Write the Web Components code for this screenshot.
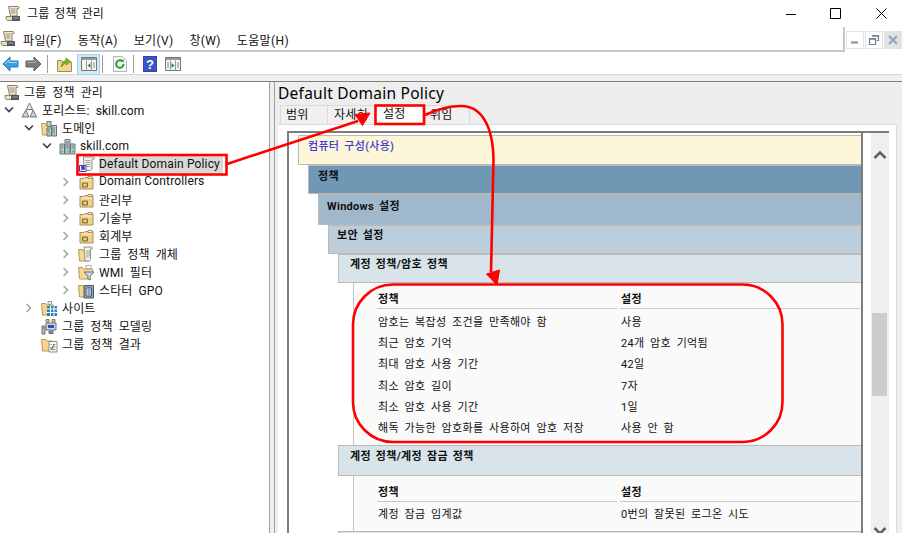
<!DOCTYPE html>
<html lang="ko"><head><meta charset="utf-8">
<style>
html,body{margin:0;padding:0;background:#fff;overflow:hidden}
body{width:902px;height:533px;font:12px Roboto,"Noto Sans CJK KR",sans-serif;color:#000}
</style></head><body>
<gpmc-window></gpmc-window>
<script>
const FONT='Roboto,"Noto Sans CJK KR",sans-serif';
const ICONS={
scroll:`<svg width="16" height="17" viewBox="0 0 16 17"><path d="M3.500 1.500h9.500c1 0 1.500 1 .8 2H12v7.500H5.500z" fill="#f3ead2" stroke="#8f8366"/><path d="M5.500 4h5M5.500 6h5M5.500 8h5" stroke="#8f8d84"/><path d="M1 11.500h9.500v4H2.500c-1 0-1.500-2-1.500-4z" fill="#e8dfc6" stroke="#8f8366"/><path d="M7 11h8v5H7z" fill="#4f5a5c"/><path d="M8.500 13h5" stroke="#a8b0b2"/></svg>`,
forest:`<svg width="17" height="16" viewBox="0 0 17 16"><path d="M8.500 1l3.200 6.500H5.300z" fill="#e9e9e9" stroke="#777"/><path d="M4.800 8L8 15H1z" fill="#cfcfcf" stroke="#777"/><path d="M12.200 8l3.300 7H9z" fill="#cfcfcf" stroke="#777"/></svg>`,
domains:`<svg width="17" height="17" viewBox="0 0 17 17"><path d="M.5 3.500h4l1 1.500h5.500v10H1.500z" fill="#f4d78c" stroke="#b9975a"/><path d="M6 1.500h4v5H6z" fill="#bcd0d6" stroke="#64787e"/><path d="M6 8h4.500v8H6zM11 5.500h4.500V16H11z" fill="#c6d2d5" stroke="#5f7076"/><path d="M7 10h2M7 12h2M12 8h2M12 10h2M12 12h2" stroke="#5f7076"/><path d="M8 14.500h1M13 14.500h1" stroke="#35c13a" stroke-width="2"/></svg>`,
domain:`<svg width="17" height="17" viewBox="0 0 17 17"><path d="M1 6h4.500v10H1zM6 1.500h5V16H6zM11.500 6H16v10h-4.500z" fill="#c6d2d5" stroke="#60757c"/><path d="M2 8h2.500M2 10h2.500M7 4h3M7 6h3M7 8h3M7 10h3M12.500 8H15M12.500 10H15" stroke="#60757c"/><path d="M2.500 13.500h1.500M8 13.500h1.500M13 13.500h1.500" stroke="#35c13a" stroke-width="2"/></svg>`,
gpo:`<svg width="16" height="16" viewBox="0 0 16 16"><path d="M4.500 1h10.300c.9 0 .9 1.800.2 2.200H13V12c0 1.500-1 2.500-2 2.500H5z" fill="#f7f4ea" stroke="#8d8d8d"/><path d="M6.500 4.500h5M6.500 6.500h5M6.500 8.500h5M7.500 10.500h4" stroke="#9b9b9b"/><path d="M.5 9.500h6.500v6H.5z" fill="#fff" stroke="#3d3d9e"/><path d="M2 11h3v3M4.800 11.200L2.200 14" fill="none" stroke="#2424b5" stroke-width="1.300"/></svg>`,
ou:`<svg width="15" height="15" viewBox="0 0 15 15"><path d="M1 3.500h4l1-1h8V14H1z" fill="#f0d28d" stroke="#a98f57"/><path d="M9 1.500h4v2H9z" fill="#fff" stroke="#a98f57"/><path d="M2 5h11" stroke="#fbefc8"/><path d="M3.500 8h5v4h-5z" fill="#c9a95b" stroke="#8a7037"/><path d="M5 10h2" stroke="#fff"/></svg>`,
gpofolder:`<svg width="17" height="17" viewBox="0 0 17 17"><path d="M.5 3.500h4l1 1.500h6v10h-10z" fill="#f4d78c" stroke="#b9975a"/><path d="M6 1h7.500c1 0 1 1.500.5 2h-1.500v9c0 2-1 3-2 3H7z" fill="#f7f4ea" stroke="#8d8d8d"/><path d="M8 5h4M8 7h4M8 9h4M8 11h3" stroke="#9b9b9b"/></svg>`,
wmi:`<svg width="17" height="17" viewBox="0 0 17 17"><path d="M.5 3.500h4l1 1.500h9v5h-3v5h-10z" fill="#f4d78c" stroke="#b9975a"/><path d="M8 1.500h5v3H8z" fill="#fff" stroke="#aaa"/><path d="M6 8h10l-3.800 4.200V16l-2.400-1.200v-2.600z" fill="#cdd5d9" stroke="#67757c"/></svg>`,
starter:`<svg width="17" height="17" viewBox="0 0 17 17"><path d="M.5 3.500h4l1 1.500h3v10h-7z" fill="#f4d78c" stroke="#b9975a"/><path d="M6 3.500h9.500V16H6z" fill="#8fa0b6" stroke="#4f5c70"/><path d="M8 6h5.500v8H8z" fill="#dfe7f2" stroke="#4f5c70"/><path d="M9.500 8h3M9.500 10h3M9.500 12h3" stroke="#395c99"/></svg>`,
sites:`<svg width="17" height="17" viewBox="0 0 17 17"><path d="M.5 3.500h4l1 1.500h7v10H1.500z" fill="#f4d78c" stroke="#b9975a"/><path d="M7 1.500h3.500v3H7z" fill="#e9f3f7" stroke="#7ea0b0"/><path d="M6 6h10v10H6z" fill="#2d7fbb"/><path d="M6 9h10M6 12.500h10M9.500 6v10M13 6v10" stroke="#fff"/></svg>`,
modeling:`<svg width="17" height="17" viewBox="0 0 17 17"><path d="M5 1.500h3v2.500H5zM11 1.500h3v2.500h-3z" fill="#e8c66e" stroke="#93784a"/><path d="M5 5h10v7H5z" fill="#cfd7e6" stroke="#5f6f8c"/><path d="M7 7h6v3H7z" fill="#2a54b0"/><path d="M8 13h4v2.500H8z" fill="#98a0a8" stroke="#5f6870"/><path d="M1 8h3v8H1z" fill="#b6bfb6" stroke="#687068"/><path d="M1.800 10h1.500" stroke="#38b838"/></svg>`,
results:`<svg width="17" height="17" viewBox="0 0 17 17"><path d="M.5 3.500h4l1 1.500h6v10h-10z" fill="#f4d78c" stroke="#b9975a"/><path d="M8 5.500h8V16H8z" fill="#fafafa" stroke="#8c8c8c"/><path d="M9.500 8.500h1.500M12.500 8.500h2M12.500 11h2M9.500 13.500h5" stroke="#8c8c8c"/><path d="M9.500 11.500l1.500 1 2-4" fill="none" stroke="#2a8d2e" stroke-width="1.100"/></svg>`
};
const svgT={
back:`<svg width="17" height="16" viewBox="0 0 17 16"><path d="M1 8l7-7v4h8v6H8v4z" fill="#36a0e0" stroke="#2a78b4"/><path d="M3 8l4-4v2.500h8" fill="none" stroke="#a8def8"/></svg>`,
fwd:`<svg width="17" height="16" viewBox="0 0 17 16"><path d="M16 8L9 1v4H1v6h8v4z" fill="#7b7b7b" stroke="#5f5f5f"/><path d="M2 6.500h8V4" fill="none" stroke="#b0b0b0"/></svg>`,
up:`<svg width="15" height="16" viewBox="0 0 15 16"><path d="M.5 4.500h4l1 1.500h9v9.500H.5z" fill="#f2d690" stroke="#a58a4d"/><path d="M4.500 11c0-4 2-6 4.500-6.500V2l4.500 3.500L9 9V6.800c-1.500.4-3 1.700-4.500 4.200z" fill="#7cbb22" stroke="#4d8a10" stroke-width=".7"/></svg>`,
tree:`<svg width="16" height="14" viewBox="0 0 16 14"><path d="M.5.500h15v13H.500z" fill="#f5f5f5" stroke="#777"/><path d="M1 1h14v2H1z" fill="#9a9a9a"/><path d="M5.500 3.500v10M10.500 3.500v10" stroke="#999"/><path d="M12 6h2M12 8h2M12 10h2" stroke="#888"/><path d="M9.500 6v5L6.500 8.500z" fill="#1e9a3e"/></svg>`,
refresh:`<svg width="14" height="16" viewBox="0 0 14 16"><path d="M.5.500h9l4 4v11H.500z" fill="#f6f6f6" stroke="#b5b5b5"/><path d="M10.500 8a3.700 3.700 0 1 1-1.300-2.800" fill="none" stroke="#2e9a3b" stroke-width="2"/><path d="M8 3.500l3 .4-.6 3z" fill="#2e9a3b"/></svg>`,
help:`<svg width="14" height="16" viewBox="0 0 14 16"><path d="M0 0h14v16H0z" fill="#2e49ab"/><path d="M1 1h12v14H1z" fill="#3957c2"/><text x="7" y="13" font-family="Liberation Sans" font-size="13" font-weight="bold" text-anchor="middle" fill="#fff">?</text></svg>`,
action:`<svg width="16" height="14" viewBox="0 0 16 14"><path d="M.5.500h15v13H.500z" fill="#f5f5f5" stroke="#777"/><path d="M1 1h14v2H1z" fill="#9a9a9a"/><path d="M5.500 3.500v10M10.500 3.500v10" stroke="#999"/><path d="M12 6h2M12 8h2M12 10h2M2 6h2M2 8h2M2 10h2" stroke="#888"/><path d="M6.500 6v5l3-2.500z" fill="#1e9a3e"/></svg>`
};

customElements.define('title-bar',class extends HTMLElement{constructor(){super();this.attachShadow({mode:'open'}).innerHTML=`<style>
:host{display:flex;align-items:center;height:27px;background:#fff;font-family:${FONT};font-size:12px}
.ic{margin-left:5px;width:16px;height:17px;display:flex}
.t{margin:-2px 0 0 6px;flex:1;word-spacing:2px;letter-spacing:.1px;color:#111}
.b{width:45px;height:27px;display:flex;align-items:center;justify-content:center}
</style><span class="ic">${ICONS.scroll}</span><span class="t"><slot></slot></span>
<span class="b"><svg width="10" height="10"><path d="M0 5.500h10" stroke="#000"/></svg></span>
<span class="b"><svg width="11" height="11"><path d="M.5.500h10v10H.500z" fill="none" stroke="#000"/></svg></span>
<span class="b" style="margin:0 -2px 0 1px"><svg width="11" height="11"><path d="M.5.500l10 10M10.500.500l-10 10" stroke="#000"/></svg></span>`}});

customElements.define('menu-bar',class extends HTMLElement{constructor(){super();this.attachShadow({mode:'open'}).innerHTML=`<style>
:host{display:flex;height:25px;background:#fff;font-family:${FONT};font-size:12px;color:#111}
.m{width:846px;height:23px;border-bottom:2px solid #c4c7cc;border-right:2px solid #c4c7cc;display:flex;align-items:center;gap:16px}
.ic{width:16px;height:17px;margin-right:-9px;display:flex}
::slotted(span){letter-spacing:.35px;padding-top:2px}
.ctl{display:flex;gap:1px;margin:4px 0 0 1px}
.c{width:16px;height:16px;border:1px solid #e4e4e4;display:flex;align-items:center;justify-content:center}
.c.x{background:#e3e3e3;border-color:#e3e3e3}
</style><div class="m"><span class="ic">${ICONS.scroll}</span><slot></slot></div>
<div class="ctl"><span class="c"><svg width="10" height="10"><path d="M1 7.500h7" stroke="#7d8ea3" stroke-width="2"/></svg></span>
<span class="c"><svg width="12" height="12"><path d="M4.500 1.500h6v5h-2M1.500 4.500h6v6h-6z" fill="none" stroke="#6e8096" stroke-width="1.200"/><path d="M4 2h6.500M1.500 5h6" stroke="#6e8096" stroke-width="1.500"/></svg></span>
<span class="c x"><svg width="10" height="10"><path d="M1 1l8 8M9 1L1 9" stroke="#95a6bb" stroke-width="2.300"/></svg></span></div>`}});

customElements.define('tool-bar',class extends HTMLElement{constructor(){super();this.attachShadow({mode:'open'}).innerHTML=`<style>
:host{display:flex;align-items:center;box-sizing:border-box;height:23px;background:#fff;padding:2px 0 0 2px;border-bottom:1px solid #d6d6d6}
span{display:flex}
.s{width:1px;height:18px;background:#9d9d9d}
.on{height:21px;width:23px;background:#d3e9fa;border:1px solid #a6d2f4;align-items:center;justify-content:center;box-sizing:border-box}
</style><span>${svgT.back}</span><span style="margin-left:6px">${svgT.fwd}</span><span class="s" style="margin-left:5px"></span>
<span style="margin-left:9px">${svgT.up}</span><span class="on" style="margin-left:5px">${svgT.tree}</span><span class="s" style="margin-left:2px"></span>
<span style="margin-left:10px">${svgT.refresh}</span><span class="s" style="margin-left:6px"></span>
<span style="margin-left:9px">${svgT.help}</span><span style="margin-left:8px">${svgT.action}</span>`}});

customElements.define('tree-row',class extends HTMLElement{constructor(){super();
const lv=+this.getAttribute('level'),st=this.getAttribute('state')||'',ic=this.getAttribute('icon'),sel=this.hasAttribute('selected');
const pad=[3,21,41,59,78][lv+1];
const latin=/^[\x00-\x7f]+$/.test(this.textContent);
const ch=st==='open'?`<svg width="10" height="8"><path d="M1 1.500l4 4 4-4" fill="none" stroke="#404040" stroke-width="1.600"/></svg>`:st==='closed'?`<svg width="8" height="10"><path d="M1.500 1l4 4-4 4" fill="none" stroke="#a6a6a6" stroke-width="1.600"/></svg>`:'';
this.attachShadow({mode:'open'}).innerHTML=`<style>
:host{display:block;height:18px;font-family:${FONT};font-size:12px;color:#111}
.r{height:18px;display:flex;align-items:center;padding-left:${pad}px;position:relative}
.a{position:absolute;left:${pad-18}px;top:0;height:18px;width:12px;display:flex;align-items:center;justify-content:center}
.i{width:17px;height:17px;display:flex;align-items:center;justify-content:center;flex:none}
.t{margin:${latin&&this.textContent!=='Domain Controllers'?0:-2}px 0 0 4px;padding-right:3px;word-spacing:${latin?0:3}px;letter-spacing:${latin?.15:.1}px;white-space:nowrap;${sel?'background:#d9d9d9;height:18px;line-height:18px;':''}}
</style><div class="r">${ch?`<span class="a">${ch}</span>`:''}<span class="i">${ICONS[ic]}</span><span class="t"><slot></slot></span></div>`}});

customElements.define('tree-pane',class extends HTMLElement{constructor(){super();this.attachShadow({mode:'open'}).innerHTML=`<style>
:host{display:block;width:269px;background:#fff;border-right:1px solid #a0a0a0;padding-top:1px}
</style><slot></slot>`}});

customElements.define('tab-strip',class extends HTMLElement{constructor(){super();this.attachShadow({mode:'open'}).innerHTML=`<style>
:host{display:flex;height:19px;padding-left:3px;align-items:stretch}
</style><slot></slot>`}});
customElements.define('tab-item',class extends HTMLElement{constructor(){super();const on=this.hasAttribute('active');this.attachShadow({mode:'open'}).innerHTML=`<style>
:host{display:block;box-sizing:border-box;width:${this.getAttribute('w')}px;height:${on?20:19}px;background:${on?'#fff':'#f0f0f0'};border:1px solid #dadada;border-bottom:none;margin-left:-1px;font-family:${FONT};font-size:12px;letter-spacing:.3px;color:#111;padding:${on?0:1}px 0 0 ${this.getAttribute('pad')}px;line-height:16px;position:relative}
</style><slot></slot>`}});

customElements.define('report-band',class extends HTMLElement{constructor(){super();const ind=this.getAttribute('indent')||0,bg=this.getAttribute('bg'),h=this.getAttribute('h')||29,c=this.getAttribute('color')||'#111',w=this.getAttribute('weight')||700;this.attachShadow({mode:'open'}).innerHTML=`<style>
:host{display:block;box-sizing:border-box;margin-left:${ind}px;height:${h}px;background:${bg};border-top:1px solid #b9b9b9;border-bottom:1px solid #b9b9b9;border-left:1px solid #b9b9b9;font-family:${FONT};font-size:11px;font-weight:${w};color:${c};padding:${this.getAttribute('pt')||0}px 0 0 ${this.getAttribute('pad')||9}px;line-height:17px;word-spacing:2px;letter-spacing:.3px;white-space:nowrap}
</style><slot></slot>`}});

customElements.define('set-table',class extends HTMLElement{constructor(){super();this.attachShadow({mode:'open'}).innerHTML=`<style>
:host{display:block;margin-left:55px;box-sizing:border-box;border-left:1px solid #c4c4c4;background:#fafafa;padding:${this.getAttribute('pt')||6}px 3px 0 23px;height:${this.getAttribute('h')}px}
</style><slot></slot>`}});
customElements.define('set-row',class extends HTMLElement{constructor(){super();const head=this.hasAttribute('head');this.attachShadow({mode:'open'}).innerHTML=`<style>
:host{display:grid;grid-template-columns:240px 240px;column-gap:3px;font-family:${FONT};font-size:11px;font-weight:${head?700:400};color:#111;height:${head?(this.getAttribute('hh')||21):21.2}px;line-height:${head?17:21}px;word-spacing:2.500px;letter-spacing:.35px;white-space:nowrap}
div{padding-left:1px;${head?'border-bottom:1px solid #c8c8c8;height:17px':''}}
</style><div><slot name="a"></slot></div><div><slot name="b"></slot></div>`}});

customElements.define('gpo-report',class extends HTMLElement{constructor(){super();this.attachShadow({mode:'open'}).innerHTML=`<style>
:host{display:flex;margin:6px 7px 0 9px;height:403px;border-top:2px solid #7d7d7d;overflow:hidden;background:#fff}
.v{border-left:2px solid #7d7d7d;border-right:2px solid #7d7d7d;padding-left:9px;padding-top:2px;overflow:hidden;width:564px;background:#fff}
.sb{width:18px;margin-left:8px;background:#f0f0f0;position:relative;display:flex;flex-direction:column;align-items:center}
.thumb{position:absolute;left:1px;top:180px;width:15px;height:83px;background:#cdcdcd}
.u{margin-top:17px;display:flex}.d{position:absolute;top:394px;display:flex}
</style><div class="v"><slot></slot></div><div class="sb"><span class="u"><svg width="14" height="9"><path d="M1.500 8L7 2.500 12.500 8" fill="none" stroke="#606060" stroke-width="2.500"/></svg></span><span class="thumb"></span><span class="d"><svg width="14" height="9"><path d="M1.500 1L7 6.500 12.500 1" fill="none" stroke="#606060" stroke-width="2.500"/></svg></span></div>`}});

customElements.define('detail-pane',class extends HTMLElement{constructor(){super();this.attachShadow({mode:'open'}).innerHTML=`<style>
:host{display:block;flex:1;margin-left:4px;border-left:1px solid #a0a0a0;background:#eee;min-width:0;padding-left:3px}
h1{margin:0;font:400 15.500px/23px "Noto Sans",sans-serif;height:23px;color:#000;letter-spacing:.25px}
.card{background:#fff;margin-right:5px;border-top:1px solid #dadada;border-right:1px solid #dadada;height:410px}
</style><h1>${this.getAttribute('heading')}</h1><slot name="tabs"></slot><div class="card"><slot></slot></div>`}});

customElements.define('markup-layer',class extends HTMLElement{constructor(){super();this.attachShadow({mode:'open'}).innerHTML=`<style>
:host{position:absolute;left:0;top:0;width:902px;height:533px;pointer-events:none}
svg{display:block}
</style><svg width="902" height="533" viewBox="0 0 902 533" fill="none" stroke="#f00" stroke-width="2.600">
<rect x="77.500" y="155" width="149" height="19.500"/>
<path d="M227 164L358 121"/><path d="M370 113L355 114.500L362.500 125.500Z" fill="#f00" stroke-width="1"/>
<rect x="375.500" y="105.500" width="48.500" height="18.500"/>
<path d="M425 115C438 109 450 106 461 106C481 106 493 125 493.500 160L491 272"/>
<path d="M497 285L486.500 274L499.500 270Z" fill="#f00" stroke-width="1"/>
<rect x="353" y="284.500" width="429.500" height="157.500" rx="40" ry="40"/>
</svg>`}});

customElements.define('gpmc-window',class extends HTMLElement{constructor(){super();this.attachShadow({mode:'open'}).innerHTML=`<style>
:host{display:block;position:relative;width:902px;height:533px;overflow:hidden;background:#fff}
.gap{height:6px;background:#f0f0f0;border-bottom:1px solid #7f7f7f}
.main{display:flex;height:451px;background:#eee}
</style>
<title-bar>그룹 정책 관리</title-bar>
<menu-bar><span>파일(F)</span><span>동작(A)</span><span>보기(V)</span><span>창(W)</span><span>도움말(H)</span></menu-bar>
<tool-bar></tool-bar>
<div class="gap"></div>
<div class="main">
<tree-pane>
<tree-row level="-1" icon="scroll">그룹 정책 관리</tree-row>
<tree-row level="0" state="open" icon="forest">포리스트: skill.com</tree-row>
<tree-row level="1" state="open" icon="domains">도메인</tree-row>
<tree-row level="2" state="open" icon="domain">skill.com</tree-row>
<tree-row level="3" icon="gpo" selected>Default Domain Policy</tree-row>
<tree-row level="3" state="closed" icon="ou">Domain Controllers</tree-row>
<tree-row level="3" state="closed" icon="ou">관리부</tree-row>
<tree-row level="3" state="closed" icon="ou">기술부</tree-row>
<tree-row level="3" state="closed" icon="ou">회계부</tree-row>
<tree-row level="3" state="closed" icon="gpofolder">그룹 정책 개체</tree-row>
<tree-row level="3" state="closed" icon="wmi">WMI 필터</tree-row>
<tree-row level="3" state="closed" icon="starter">스타터 GPO</tree-row>
<tree-row level="1" state="closed" icon="sites">사이트</tree-row>
<tree-row level="1" icon="modeling">그룹 정책 모델링</tree-row>
<tree-row level="1" icon="results">그룹 정책 결과</tree-row>
</tree-pane>
<detail-pane heading="Default Domain Policy">
<tab-strip slot="tabs">
<tab-item w="48" pad="5">범위</tab-item><tab-item w="49" pad="6">자세히</tab-item><tab-item w="51" pad="7" active>설정</tab-item><tab-item w="45" pad="4">위임</tab-item>
</tab-strip>
<gpo-report>
<report-band bg="#fdf6d8" h="30" color="#3c3cd6" pad="9" weight="500" pt="2">컴퓨터 구성(사용)</report-band>
<report-band indent="10" bg="#7097b4" h="29" pt="2">정책</report-band>
<report-band indent="20" bg="#a0b8cc" h="31" pt="3" pad="8">Windows 설정</report-band>
<report-band indent="30" bg="#bccedc" h="29" pt="1" pad="8">보안 설정</report-band>
<report-band indent="40" bg="#d8e3ea" h="29" pad="11" pt="1">계정 정책/암호 정책</report-band>
<set-table h="162" pt="8">
<set-row head><span slot="a">정책</span><span slot="b">설정</span></set-row>
<set-row><span slot="a">암호는 복잡성 조건을 만족해야 함</span><span slot="b">사용</span></set-row>
<set-row><span slot="a">최근 암호 기억</span><span slot="b">24개 암호 기억됨</span></set-row>
<set-row><span slot="a">최대 암호 사용 기간</span><span slot="b">42일</span></set-row>
<set-row><span slot="a">최소 암호 길이</span><span slot="b">7자</span></set-row>
<set-row><span slot="a">최소 암호 사용 기간</span><span slot="b">1일</span></set-row>
<set-row><span slot="a">해독 가능한 암호화를 사용하여 암호 저장</span><span slot="b">사용 안 함</span></set-row>
</set-table>
<report-band indent="40" bg="#d8e3ea" h="31" pad="11" pt="2">계정 정책/계정 잠금 정책</report-band>
<set-table h="55" pt="8">
<set-row head hh="20"><span slot="a">정책</span><span slot="b">설정</span></set-row>
<set-row><span slot="a">계정 잠금 임계값</span><span slot="b">0번의 잘못된 로그온 시도</span></set-row>
</set-table>
<report-band indent="40" bg="#d8e3ea" h="31"></report-band>
</gpo-report>
</detail-pane>
</div>
<markup-layer></markup-layer>`}});
</script></body></html>
